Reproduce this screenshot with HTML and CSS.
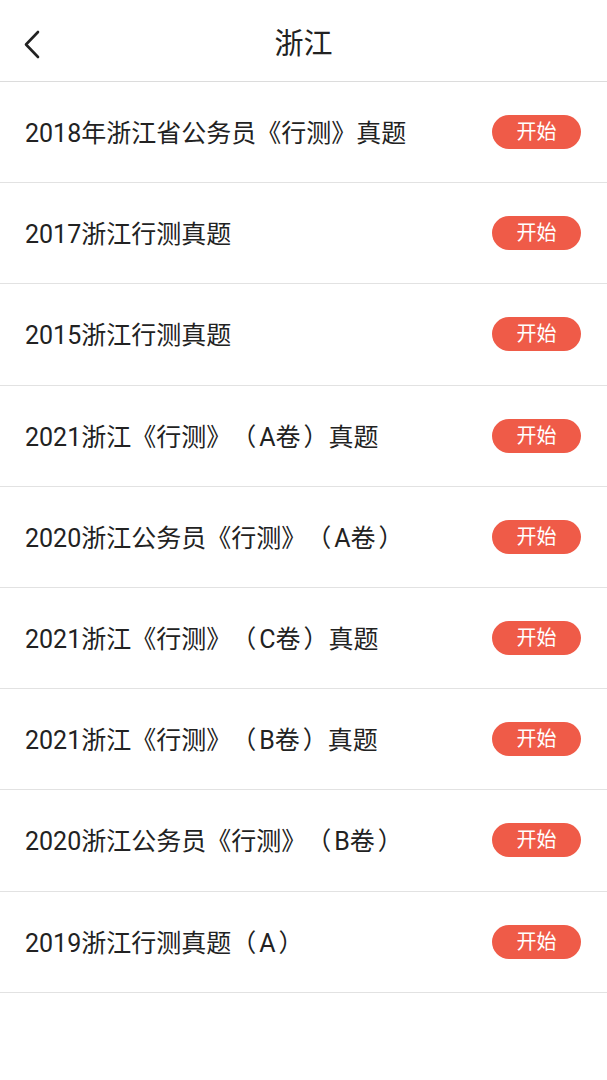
FILE: index.html
```html
<!DOCTYPE html>
<html lang="zh-CN">
<head>
<meta charset="utf-8">
<link rel="stylesheet" href="styles.css">
</head>
<body>
<div class="page">
  <header class="topbar">
    <span class="back">
      <svg width="20" height="30" viewBox="0 0 20 30"><path d="M15 2 L3 14.5 L15 27" fill="none" stroke="#222" stroke-width="2.6" stroke-linecap="round" stroke-linejoin="round"/></svg>
    </span>
    <h1 class="title">浙江</h1>
  </header>
  <ul class="list">
    <li class="row"><span class="name">2018年浙江省公务员《行测》真题</span><span class="btn">开始</span></li>
    <li class="row"><span class="name">2017浙江行测真题</span><span class="btn">开始</span></li>
    <li class="row"><span class="name">2015浙江行测真题</span><span class="btn">开始</span></li>
    <li class="row"><span class="name">2021浙江《行测》（<span class="in">A卷</span>）真题</span><span class="btn">开始</span></li>
    <li class="row"><span class="name">2020浙江公务员《行测》（<span class="in">A卷</span>）</span><span class="btn">开始</span></li>
    <li class="row"><span class="name">2021浙江《行测》（<span class="in">C卷</span>）真题</span><span class="btn">开始</span></li>
    <li class="row"><span class="name">2021浙江《行测》（<span class="in">B卷</span>）真题</span><span class="btn">开始</span></li>
    <li class="row"><span class="name">2020浙江公务员《行测》（<span class="in">B卷</span>）</span><span class="btn">开始</span></li>
    <li class="row"><span class="name">2019浙江行测真题（<span class="in">A</span>）</span><span class="btn">开始</span></li>
  </ul>
</div>
</body>
</html>
```

FILE: styles.css
```css
* { box-sizing: border-box; }
html, body { margin: 0; padding: 0; background: #fff; }
body {
  font-family: Roboto, "Noto Sans CJK SC", sans-serif;
  color: #222;
  text-spacing-trim: space-all;
}
.page { width: 607px; }
.topbar {
  position: relative;
  height: 82px;
  border-bottom: 1px solid #dcdcdc;
  display: flex;
  align-items: center;
  justify-content: center;
}
.back {
  position: absolute;
  left: 23px;
  top: 30px;
  width: 20px;
  height: 30px;
  display: flex;
}
.title {
  margin: 0;
  font-size: 29px;
  font-weight: 400;
  color: #222;
  line-height: 1;
  margin-top: 8px;
}
.list { list-style: none; margin: 0; padding: 0; }
.row {
  height: 101.2px;
  border-bottom: 1px solid #e2e2e2;
  display: flex;
  align-items: center;
  justify-content: space-between;
  padding: 0 26px 0 25px;
}
.name {
  font-size: 25px;
  line-height: 1;
  color: #222;
  margin-top: 3px;
}
.in { margin: 0 3px; }
.btn {
  width: 89px;
  height: 34px;
  border-radius: 17px;
  background: #ef5b48;
  color: #fff;
  font-size: 20px;
  display: flex;
  align-items: center;
  justify-content: center;
  line-height: 1;
}
```
